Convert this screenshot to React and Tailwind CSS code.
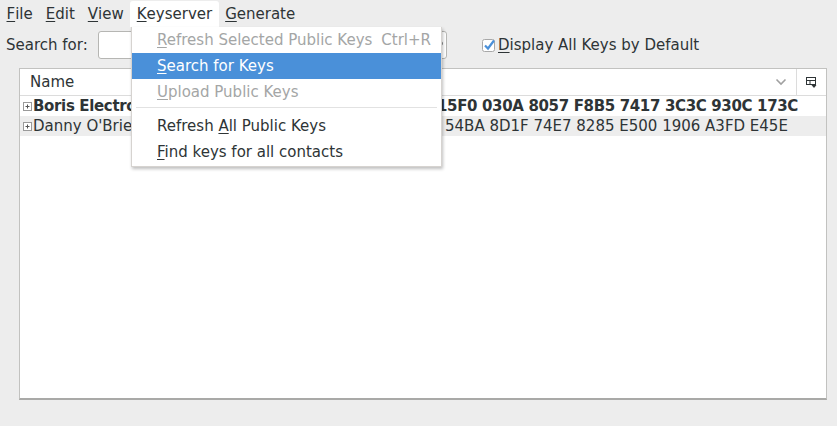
const MENUBAR = [
  { key: 'F', rest: 'ile' },
  { key: 'E', rest: 'dit' },
  { key: 'V', rest: 'iew' },
  { key: 'K', rest: 'eyserver', open: true },
  { key: 'G', rest: 'enerate' },
]

const KEYS = [
  { name: 'Boris Electronic Frontier', pre: '1A2B 3C4D', fp: '15F0 030A 8057 F8B5 7417 3C3C 930C 173C', bold: true },
  { name: "Danny O'Brien", pre: '9E1C 0B37', fp: '54BA 8D1F 74E7 8285 E500 1906 A3FD E45E' },
]

function Expander() {
  return (
    <svg width="11" height="11" viewBox="0 0 11 11" className="shrink-0">
      <rect x="1.5" y="1.5" width="8" height="8" fill="#fff" stroke="#9a9a9a" />
      <path d="M3.5 5.5h4M5.5 3.5v4" stroke="#555" />
    </svg>
  )
}

function MenuItem({ pre = '', u, post, shortcut, disabled, active }) {
  return (
    <div
      className={`flex h-[26px] items-center justify-between pl-[25px] pr-[10px] ${
        active ? 'bg-[#4a90d9] text-white' : disabled ? 'text-[#a4a6a6]' : 'text-[#2e3436]'
      }`}
    >
      <span>
        {pre}
        <span className="underline underline-offset-2">{u}</span>
        {post}
      </span>
      {shortcut && <span>{shortcut}</span>}
    </div>
  )
}

export default function App() {
  return (
    <div className="relative h-[426px] w-[837px] overflow-hidden bg-[#ededed] font-['DejaVu_Sans',sans-serif] text-[15px] text-[#2e3436]">
      <div className="flex h-[27px] items-stretch pt-[1px]">
        {MENUBAR.map((m) => (
          <div
            key={m.key}
            className={`flex items-center px-[6.5px] ${m.open ? 'rounded-t-[3px] bg-white' : ''}`}
          >
            <span className="underline underline-offset-2">{m.key}</span>
            {m.rest}
          </div>
        ))}
      </div>

      <div className="flex h-[36px] items-center">
        <span className="ml-[6px] w-[92px]">Search for:</span>
        <div className="flex h-[28px] w-[349px] items-center justify-end rounded-[3px] border border-[#b6b6b3] bg-white pr-[3px]">
          <svg width="10" height="10" viewBox="0 0 10 10">
            <path d="M2 8l3-3" stroke="#2e3436" strokeWidth="2" />
            <circle cx="6.5" cy="3.5" r="2.5" fill="none" stroke="#2e3436" strokeWidth="1.2" />
          </svg>
        </div>
        <label className="ml-[35px] flex items-center">
          <svg width="15" height="15" viewBox="0 0 15 15" className="mr-[1px]">
            <rect x="0.5" y="1.5" width="12" height="12" rx="2" fill="#fff" stroke="#a8a8a8" />
            <path d="M3 7.5l3 3 6-8" fill="none" stroke="#4a90d9" strokeWidth="2.2" />
          </svg>
          <span>
            <span className="underline underline-offset-2">D</span>isplay All Keys by Default
          </span>
        </label>
      </div>

      <div className="mx-[19px] mt-[5px] h-[332px] w-[808px] border border-b-2 border-[#c2c2c0] border-b-[#a9a9a7] bg-white">
        <div className="flex h-[27px] items-center border-b border-[#dcdcdc]">
          <span className="ml-[10px] flex-1">Name</span>
          <svg width="12" height="8" viewBox="0 0 12 8" className="mr-[9px]">
            <path d="M1.5 1.5l4.5 4.5 4.5-4.5" fill="none" stroke="#a0a0a0" strokeWidth="1.6" />
          </svg>
          <div className="flex h-full w-[30px] items-center justify-center border-l border-[#dcdcdc]">
            <svg width="11" height="11" viewBox="0 0 11 11">
              <rect x="0.5" y="0.5" width="9" height="7" fill="none" stroke="#2e3436" />
              <path d="M0.5 3.5h9M4 3.5v4" stroke="#2e3436" />
              <path d="M5.5 8h5l-2.5 3z" fill="#2e3436" />
            </svg>
          </div>
        </div>
        {KEYS.map((k, i) => (
          <div
            key={k.fp}
            className={`flex h-[20px] items-center pl-[2px] whitespace-nowrap ${i % 2 ? 'bg-[#ededed]' : ''} ${
              k.bold ? 'font-bold tracking-[-0.35px]' : ''
            }`}
          >
            <Expander />
            <span className="w-[240px] overflow-hidden">{k.name}</span>
            <span className={`overflow-hidden pr-[5px] text-right ${k.bold ? 'w-[164px]' : 'w-[172px]'}`}>
              {k.pre}
            </span>
            <span>{k.fp}</span>
          </div>
        ))}
      </div>

      <div className="absolute left-[131px] top-[27px] w-[311px] border border-t-0 border-[#d6d3d0] bg-white pb-[1px] shadow-[1px_2px_3px_rgba(0,0,0,0.25)]">
        <MenuItem u="R" post="efresh Selected Public Keys" shortcut="Ctrl+R" disabled />
        <MenuItem u="S" post="earch for Keys" active />
        <MenuItem u="U" post="pload Public Keys" disabled />
        <div className="flex h-[8px] items-start px-[4px] pt-[2px]">
          <div className="h-px w-full bg-[#e2e2e2]" />
        </div>
        <MenuItem pre="Refresh " u="A" post="ll Public Keys" />
        <MenuItem u="F" post="ind keys for all contacts" />
      </div>
    </div>
  )
}
